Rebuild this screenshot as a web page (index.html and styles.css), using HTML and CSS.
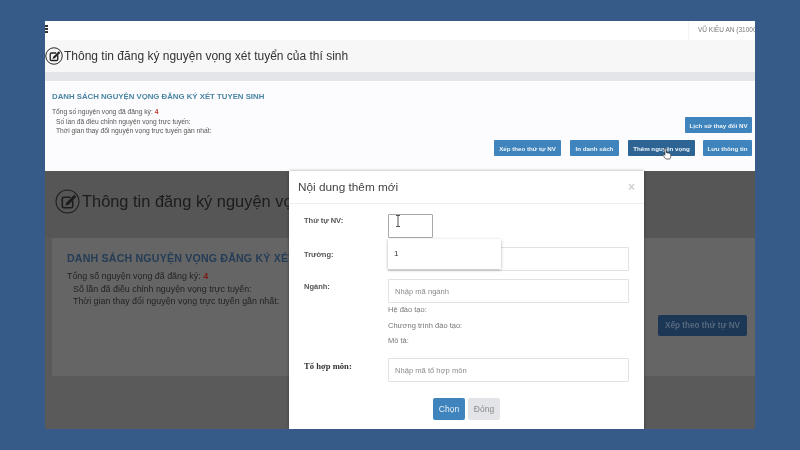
FILE: index.html
```html
<!DOCTYPE html>
<html lang="vi">
<head>
    <meta charset="UTF-8">
    <meta name="viewport" content="width=device-width, initial-scale=1.0">
    <title>Thông tin đăng ký nguyện vọng</title>
    <link rel="stylesheet" href="styles.css">
</head>
<body>

<div class="screen">

    <!-- page before the dialog opened -->
    <div class="page">
        <div class="topbar">
            <div class="menu-icon"><span></span><span></span><span></span></div>
            <div class="user">VŨ KIỀU AN (310000</div>
        </div>
        <div class="title-bar">
            <svg class="edit-icon" viewBox="0 0 24 24" fill="none" stroke="#222" stroke-width="1.3">
                <circle cx="12" cy="12" r="11"/>
                <path d="M15 8H8.5A1.5 1.5 0 0 0 7 9.5v7A1.5 1.5 0 0 0 8.5 18h7a1.5 1.5 0 0 0 1.5-1.5V11" stroke-width="1.8"/>
                <path d="M18.5 5.5l-7.5 7.5-1 3 3-1 7.5-7.5z" fill="#222" stroke="none"/>
            </svg>
            <h1>Thông tin đăng ký nguyện vọng xét tuyển của thí sinh</h1>
        </div>
        <div class="band"></div>
        <div class="panel">
            <div class="panel-info">
                <h2>DANH SÁCH NGUYỆN VỌNG ĐĂNG KÝ XÉT TUYỂN SINH</h2>
                <p>Tổng số nguyện vọng đã đăng ký: <b class="count">4</b></p>
                <p class="indent">Số lần đã điều chỉnh nguyện vọng trực tuyến:</p>
                <p class="indent">Thời gian thay đổi nguyện vọng trực tuyến gần nhất:</p>
            </div>
            <div class="actions">
                <div class="btn-row">
                    <button class="btn">Lịch sử thay đổi NV</button>
                </div>
                <div class="btn-row">
                    <button class="btn btn-wide">Xếp theo thứ tự NV</button>
                    <button class="btn">In danh sách</button>
                    <button class="btn btn-wide btn-active">Thêm nguyện vọng</button>
                    <button class="btn">Lưu thông tin</button>
                </div>
            </div>
        </div>
    </div>

    <!-- same page under the modal backdrop -->
    <div class="dimmed">
        <div class="dim-title">
            <svg class="dim-icon" viewBox="0 0 24 24" fill="none" stroke="#1c1c1c" stroke-width="1">
                <circle cx="12" cy="12" r="11"/>
                <path d="M15 8H8.5A1.5 1.5 0 0 0 7 9.5v7A1.5 1.5 0 0 0 8.5 18h7a1.5 1.5 0 0 0 1.5-1.5V11" stroke-width="1.5"/>
                <path d="M18.5 5.5l-7.5 7.5-1 3 3-1 7.5-7.5z" fill="#1c1c1c" stroke="none"/>
            </svg>
            <h1>Thông tin đăng ký nguyện vọng xét tuyển của thí sinh</h1>
        </div>
        <div class="dim-panel">
            <div>
                <h2>DANH SÁCH NGUYỆN VỌNG ĐĂNG KÝ XÉT TUYỂN SINH</h2>
                <p>Tổng số nguyện vọng đã đăng ký: <b class="dim-count">4</b></p>
                <p class="dim-indent">Số lần đã điều chỉnh nguyện vọng trực tuyến:</p>
                <p class="dim-indent">Thời gian thay đổi nguyện vọng trực tuyến gần nhất:</p>
            </div>
            <button class="dim-btn">Xếp theo thứ tự NV</button>
        </div>
    </div>

    <div class="modal">
        <div class="modal-header">
            <span class="modal-title">Nội dung thêm mới</span>
            <span class="modal-close">×</span>
        </div>
        <div class="modal-body">
            <div class="form-row row-order">
                <label>Thứ tự NV:</label>
                <div class="field">
                    <div class="input input-short"></div>
                </div>
            </div>
            <div class="form-row row-school">
                <label>Trường:</label>
                <div class="field"><div class="input"></div></div>
            </div>
            <div class="form-row row-major">
                <label>Ngành:</label>
                <div class="field">
                    <div class="input">Nhập mã ngành</div>
                    <div class="note">Hệ đào tạo:</div>
                    <div class="note">Chương trình đào tạo:</div>
                    <div class="note">Mô tả:</div>
                </div>
            </div>
            <div class="form-row row-combo">
                <label class="label-serif">Tổ hợp môn:</label>
                <div class="field"><div class="input">Nhập mã tổ hợp môn</div></div>
            </div>
            <div class="modal-footer">
                <button class="btn-choose">Chọn</button>
                <button class="btn-close">Đóng</button>
            </div>
        </div>
        <div class="dropdown">1</div>
        <svg class="text-cursor" viewBox="0 0 6 12" fill="none" stroke="#555" stroke-width="1">
            <path d="M1 .5h4M3 .5v11M1 11.5h4"/>
        </svg>
    </div>

    <svg class="hand-cursor" viewBox="0 0 12 14">
        <path d="M3.5 1.2c0-1 1.7-1 1.7 0v4.2l3.6.7c1.3.3 1.9 1 1.8 2.2l-.4 3.2c-.1.9-.6 1.5-1.4 1.5H5.3c-.7 0-1.1-.3-1.5-.9L1.2 8.4c-.5-.8.6-1.6 1.3-.9l1 1.1z" fill="#fff" stroke="#222" stroke-width=".8"/>
    </svg>
</div>

</body>
</html>
```

FILE: styles.css
```css
* {
    box-sizing: border-box;
}

body {
    margin: 0;
    height: 450px;
    padding: 21px 45px;
    overflow: hidden;
    background-color: #375b88;
    font-family: "Liberation Sans", Arial, sans-serif;
}

h1, h2, p {
    margin: 0;
    font-weight: normal;
}

button {
    font-family: inherit;
    border: none;
}

.screen {
    position: relative;
    width: 710px;
    height: 408px;
    overflow: hidden;
    display: flex;
    flex-direction: column;
    filter: blur(0.45px);
}

/* top part */
.page {
    height: 150px;
    background-color: #fff;
}

.topbar {
    height: 19px;
    display: flex;
    justify-content: space-between;
}

.menu-icon {
    display: flex;
    flex-direction: column;
    gap: 1px;
    padding-top: 4px;
}

.menu-icon span {
    display: block;
    width: 3px;
    height: 2px;
    background-color: #333;
}

.user {
    width: 67px;
    padding: 4px 0 0 9px;
    white-space: nowrap;
    overflow: hidden;
    font-size: 6.5px;
    line-height: 9px;
    color: #777;
    border-left: 1px solid #f4f4f4;
}

.title-bar {
    height: 32px;
    display: flex;
    align-items: center;
    background-color: #f7f7f8;
}

.edit-icon {
    width: 18px;
    height: 18px;
    margin-right: 1px;
    flex-shrink: 0;
}

.title-bar h1 {
    font-size: 12px;
    color: #333;
}

.band {
    height: 9px;
    background-color: #e3e5e9;
}

.panel {
    height: 90px;
    display: flex;
    justify-content: space-between;
    background-color: #fcfcfe;
    padding: 0 3px 0 7px;
}

.panel-info {
    padding-top: 10px;
    font-size: 6.7px;
    line-height: 9.5px;
    color: #555;
}

.panel-info h2 {
    font-size: 7.8px;
    font-weight: bold;
    line-height: 12px;
    color: #4a84a3;
    margin-bottom: 4px;
}

.indent {
    padding-left: 4px;
}

.count {
    color: #c0392b;
}

.actions {
    display: flex;
    flex-direction: column;
    align-items: flex-end;
    gap: 7px;
    padding-top: 36px;
}

.btn-row {
    display: flex;
    gap: 9px;
}

.btn {
    width: 49px;
    height: 16px;
    padding: 0;
    font-size: 6.2px;
    font-weight: bold;
    white-space: nowrap;
    color: #eef4f9;
    background-color: #3f84bc;
    border-radius: 1px;
}

.btn-row:first-child .btn,
.btn-wide {
    width: 67px;
}

.btn-row .btn:nth-child(3) {
    margin-right: -1px;
}

.btn-active {
    background-color: #2d6493;
}

/* dimmed part behind the modal */
.dimmed {
    flex: 1;
    background-color: #5a5a5a;
}

.dim-title {
    height: 67px;
    padding: 18px 0 0 10px;
    display: flex;
    align-items: flex-start;
    background-color: #565656;
}

.dim-icon {
    width: 25px;
    height: 25px;
    margin-right: 2px;
    flex-shrink: 0;
}

.dim-title h1 {
    font-size: 16.4px;
    line-height: 25px;
    white-space: nowrap;
    color: #1c1c1c;
}

.dim-panel {
    height: 138px;
    margin-left: 7px;
    padding: 13px 8px 0 15px;
    display: flex;
    justify-content: space-between;
    background-color: #656565;
    font-size: 8.9px;
    line-height: 12.5px;
    color: #232323;
}

.dim-panel h2 {
    font-size: 10.6px;
    font-weight: bold;
    line-height: 15px;
    letter-spacing: 0.2px;
    white-space: nowrap;
    color: #243c56;
    margin-bottom: 4px;
}

.dim-indent {
    padding-left: 6px;
    white-space: nowrap;
}

.dim-count {
    color: #7c1a14;
}

.dim-btn {
    width: 89px;
    height: 21px;
    margin-top: 64px;
    padding: 0;
    font-size: 8.2px;
    font-weight: bold;
    white-space: nowrap;
    color: #56697d;
    background-color: #1c3655;
    border-radius: 2px;
}

/* modal */
.modal {
    position: absolute;
    left: 244px;
    top: 150px;
    width: 355px;
    height: 258px;
    background-color: #fff;
    box-shadow: 0 0 3px rgba(0, 0, 0, 0.35);
}

.modal-header {
    height: 33px;
    padding: 0 9px;
    display: flex;
    align-items: center;
    justify-content: space-between;
    border-bottom: 1px solid #eee;
}

.modal-title {
    font-size: 11.8px;
    color: #444;
}

.modal-close {
    font-size: 12px;
    font-weight: bold;
    color: #d0d0d0;
}

.modal-body {
    padding: 10px 15px 0;
}

.form-row {
    display: grid;
    grid-template-columns: 84px 241px;
    align-items: start;
}

.form-row label {
    font-size: 7.5px;
    font-weight: bold;
    line-height: 12px;
    color: #555;
}

.row-order {
    height: 33px;
}

.row-order label {
    padding-top: 1px;
}

.row-school {
    height: 32px;
}

.row-school label {
    padding-top: 2px;
}

.row-major {
    height: 79px;
}

.row-major label {
    padding-top: 2px;
}

.row-combo {
    height: 41px;
}

.form-row .label-serif {
    padding-top: 2px;
    font-family: "Liberation Serif", serif;
    font-size: 8.6px;
    color: #333;
}

.input {
    height: 24px;
    padding: 0 6px;
    display: flex;
    align-items: center;
    font-size: 7.6px;
    color: #8a8a8a;
    background-color: #fff;
    border: 1px solid #e2e2e2;
    border-radius: 1px;
}

.input-short {
    width: 45px;
    border-color: #a8a8a8;
}

.note {
    margin-top: 2.5px;
    font-size: 7.5px;
    line-height: 13px;
    color: #777;
}

.input + .note {
    margin-top: 0;
}

.modal-footer {
    display: flex;
    justify-content: center;
    gap: 3px;
    margin-top: -1px;
}

.btn-choose,
.btn-close {
    width: 32px;
    height: 22px;
    padding: 0;
    font-size: 8.5px;
    border-radius: 2px;
}

.btn-choose {
    color: #eaf2f8;
    background-color: #3f84bc;
}

.btn-close {
    color: #8a8a8a;
    background-color: #e3e4e8;
}

/* things lying over the modal */
.dropdown {
    position: absolute;
    left: 99px;
    top: 68px;
    width: 113px;
    height: 30px;
    padding: 10px 0 0 6px;
    font-size: 8px;
    line-height: 10px;
    color: #333;
    background-color: #fff;
    box-shadow: 0 1px 3px rgba(0, 0, 0, 0.3);
}

.text-cursor {
    position: absolute;
    left: 106px;
    top: 44px;
    width: 6px;
    height: 12px;
}

.hand-cursor {
    position: absolute;
    left: 617px;
    top: 127px;
    width: 10px;
    height: 12px;
}
```
